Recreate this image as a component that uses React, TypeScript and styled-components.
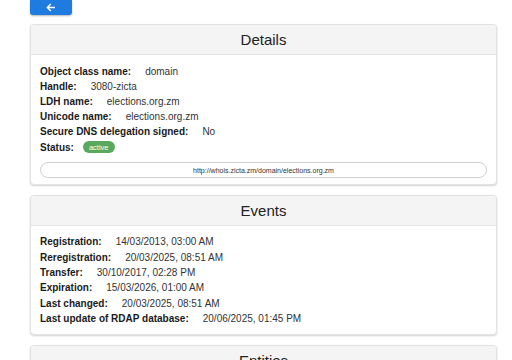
import React from 'react'
import styled, { createGlobalStyle } from 'styled-components'

const GlobalStyle = createGlobalStyle`
  html, body {
    margin: 0;
    padding: 0;
    background: #ffffff;
    font-family: 'Liberation Sans', Arial, sans-serif;
    color: #222;
  }
  * { box-sizing: border-box; }
`

const Page = styled.div`
  padding: 0 15px 0 30px;
  display: flex;
  flex-direction: column;
  align-items: stretch;
`

const BackButton = styled.button`
  width: 42px;
  height: 15px;
  margin: 0 0 9px 0;
  padding: 0;
  border: none;
  border-radius: 0 0 3px 3px;
  background: #1e7be0;
  box-shadow: 0 1px 2px rgba(0, 0, 0, 0.3);
  display: flex;
  align-items: center;
  justify-content: center;
  cursor: pointer;
`

const Card = styled.section`
  border: 1px solid #e2e2e2;
  border-radius: 4px;
  background: #fff;
  box-shadow: 0 1px 2px rgba(0, 0, 0, 0.18);
  margin-bottom: 10px;
  overflow: hidden;
`

const CardHeader = styled.div`
  height: 30px;
  background: #f4f4f4;
  border-bottom: 1px solid #e4e4e4;
  display: flex;
  align-items: center;
  justify-content: center;
  font-size: 15px;
  color: #222;
`

const CardBody = styled.div<{ $top: number; $bottom: number }>`
  padding: ${(p) => p.$top}px 9px ${(p) => p.$bottom}px 9px;
  display: flex;
  flex-direction: column;
`

const Row = styled.div<{ $h: number }>`
  display: flex;
  align-items: center;
  gap: 14px;
  height: ${(p) => p.$h}px;
  font-size: 10px;
`

const Label = styled.span`
  font-weight: bold;
  color: #1a1a1a;
`

const Value = styled.span`
  color: #333;
`

const Badge = styled.span`
  margin-left: -5px;
  background: #58a85e;
  color: #fff;
  font-size: 7.5px;
  border-radius: 7px;
  padding: 0 6px;
  height: 12px;
  display: inline-flex;
  align-items: center;
`

const LinkPill = styled.div`
  margin-top: 7px;
  height: 16px;
  border: 1px solid #cfcfcf;
  border-radius: 9px;
  display: flex;
  align-items: center;
  justify-content: center;
  font-size: 7px;
  color: #333;
`

const details: [string, string][] = [
  ['Object class name:', 'domain'],
  ['Handle:', '3080-zicta'],
  ['LDH name:', 'elections.org.zm'],
  ['Unicode name:', 'elections.org.zm'],
  ['Secure DNS delegation signed:', 'No'],
]

const events: [string, string][] = [
  ['Registration:', '14/03/2013, 03:00 AM'],
  ['Reregistration:', '20/03/2025, 08:51 AM'],
  ['Transfer:', '30/10/2017, 02:28 PM'],
  ['Expiration:', '15/03/2026, 01:00 AM'],
  ['Last changed:', '20/03/2025, 08:51 AM'],
  ['Last update of RDAP database:', '20/06/2025, 01:45 PM'],
]

const App: React.FC = () => {
  return (
    <Page>
      <GlobalStyle />
      <BackButton aria-label="Back">
        <svg width="10" height="9" viewBox="0 0 10 9" fill="none">
          <path d="M9 4.5H1.5M4.8 1L1.3 4.5L4.8 8" stroke="#fff" strokeWidth="1.4" />
        </svg>
      </BackButton>

      <Card>
        <CardHeader>Details</CardHeader>
        <CardBody $top={9} $bottom={6}>
          {details.map(([k, v]) => (
            <Row key={k} $h={15}>
              <Label>{k}</Label>
              <Value>{v}</Value>
            </Row>
          ))}
          <Row $h={16}>
            <Label>Status:</Label>
            <Badge>active</Badge>
          </Row>
          <LinkPill>http://whois.zicta.zm/domain/elections.org.zm</LinkPill>
        </CardBody>
      </Card>

      <Card>
        <CardHeader>Events</CardHeader>
        <CardBody $top={8} $bottom={8}>
          {events.map(([k, v]) => (
            <Row key={k} $h={15.4}>
              <Label>{k}</Label>
              <Value>{v}</Value>
            </Row>
          ))}
        </CardBody>
      </Card>

      <Card>
        <CardHeader>Entities</CardHeader>
        <CardBody $top={9} $bottom={9} />
      </Card>
    </Page>
  )
}

export default App
